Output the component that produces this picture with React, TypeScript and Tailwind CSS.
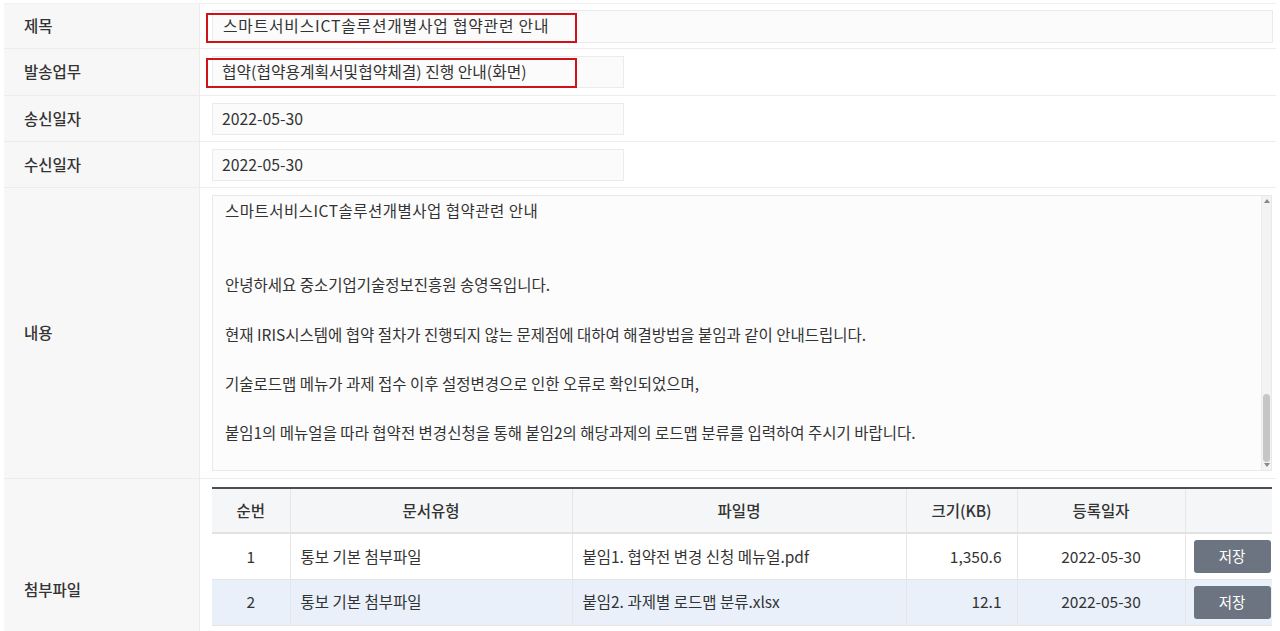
import React from 'react';

const font = "font-['Noto_Sans_CJK_KR','Noto_Sans',sans-serif]";

const Row = ({
  label,
  className,
  children,
}: {
  label: string;
  className: string;
  children: React.ReactNode;
}) => (
  <div className={`flex border-b border-[#ececec] ${className}`}>
    <div className="w-[196px] shrink-0 bg-[#f7f7f8] border-r border-[#ececec] pl-[20px] flex items-center text-[15.5px] font-medium text-[#333]">
      {label}
    </div>
    <div className="flex-1 relative pl-[12px] pr-[3px] flex items-center">{children}</div>
  </div>
);

const Input = ({ value }: { value: string }) => (
  <div className="h-[32px] w-[412px] bg-[#fbfbfb] border border-[#ebebeb] flex items-center pl-[9px] text-[15.8px] text-[#333]">
    {value}
  </div>
);

const RedBox = () => (
  <div className="absolute left-[6px] top-[9px] w-[371px] h-[30px] border-2 border-[#d0121b]" />
);

const files = [
  { no: 1, type: '통보 기본 첨부파일', name: '붙임1. 협약전 변경 신청 메뉴얼.pdf', size: '1,350.6', date: '2022-05-30' },
  { no: 2, type: '통보 기본 첨부파일', name: '붙임2. 과제별 로드맵 분류.xlsx', size: '12.1', date: '2022-05-30' },
];

export default function App() {
  return (
    <div className={`min-h-screen bg-white pt-[3px] pl-[4px] ${font} text-[#333]`}>
      <div className="w-[1272px] border-t border-[#f1f1f1]">
        <Row label="제목" className="h-[45px]">
          <div className="h-[33px] flex-1 bg-[#fbfbfb] border border-[#ebebeb] flex items-center pl-[10px] text-[15.8px] tracking-[0.8px]">
            스마트서비스ICT솔루션개별사업 협약관련 안내
          </div>
          <RedBox />
        </Row>
        <Row label="발송업무" className="h-[47px]">
          <Input value="협약(협약용계획서및협약체결) 진행 안내(화면)" />
          <RedBox />
        </Row>
        <Row label="송신일자" className="h-[46px]">
          <Input value="2022-05-30" />
        </Row>
        <Row label="수신일자" className="h-[46px]">
          <Input value="2022-05-30" />
        </Row>
        <Row label="내용" className="h-[291px]">
          <div className="flex-1 h-[276px] mr-[1px] bg-[#fcfcfc] border border-[#e9e9e9] flex overflow-hidden">
            <div className="flex-1 pl-[12px] pt-[2px] text-[15.5px] leading-[24.7px] text-[#333]">
              <p className="tracking-[0.5px]">스마트서비스ICT솔루션개별사업 협약관련 안내</p>
              <p>&nbsp;</p>
              <p>&nbsp;</p>
              <p>안녕하세요 중소기업기술정보진흥원 송영옥입니다.</p>
              <p>&nbsp;</p>
              <p>현재 IRIS시스템에 협약 절차가 진행되지 않는 문제점에 대하여 해결방법을 붙임과 같이 안내드립니다.</p>
              <p>&nbsp;</p>
              <p>기술로드맵 메뉴가 과제 접수 이후 설정변경으로 인한 오류로 확인되었으며,</p>
              <p>&nbsp;</p>
              <p>붙임1의 메뉴얼을 따라 협약전 변경신청을 통해 붙임2의 해당과제의 로드맵 분류를 입력하여 주시기 바랍니다.</p>
            </div>
            {/* scrollbar */}
            <div className="w-[10px] bg-[#f3f3f3] border-l border-[#eaeaea] flex flex-col items-center justify-between py-[3px]">
              <div className="w-0 h-0 border-l-[3px] border-r-[3px] border-b-[4px] border-l-transparent border-r-transparent border-b-[#888]" />
              <div className="flex-1 flex flex-col justify-end w-full items-center pb-[1px]">
                <div className="w-[7px] h-[68px] rounded-[4px] bg-[#c6c6c6]" />
              </div>
              <div className="w-0 h-0 border-l-[3px] border-r-[3px] border-t-[4px] border-l-transparent border-r-transparent border-t-[#888]" />
            </div>
          </div>
        </Row>
        <div className="flex h-[222px]">
          <div className="w-[196px] shrink-0 bg-[#f7f7f8] border-r border-[#ececec] pl-[20px] flex items-center text-[15.5px] font-medium">
            첨부파일
          </div>
          <div className="flex-1 pl-[12px] pr-[3px] pt-[8px]">
            <table className="w-[1060px] border-collapse table-fixed text-[15.5px] text-[#333]">
              <colgroup>
                <col className="w-[78px]" />
                <col className="w-[282px]" />
                <col className="w-[334px]" />
                <col className="w-[111px]" />
                <col className="w-[168px]" />
                <col className="w-[87px]" />
              </colgroup>
              <thead>
                <tr className="h-[45px] bg-[#f5f6f7] border-t-2 border-[#4a4f55] border-b-2 border-b-[#e2e2e2]">
                  <th className="font-medium border-r border-[#e6e6e6]">순번</th>
                  <th className="font-medium border-r border-[#e6e6e6]">문서유형</th>
                  <th className="font-medium border-r border-[#e6e6e6]">파일명</th>
                  <th className="font-medium border-r border-[#e6e6e6]">크기(KB)</th>
                  <th className="font-medium border-r border-[#e6e6e6]">등록일자</th>
                  <th className="font-medium"></th>
                </tr>
              </thead>
              <tbody>
                {files.map((f) => (
                  <tr
                    key={f.no}
                    className={`h-[46px] border-b border-[#e4e4e4] ${f.no === 2 ? 'bg-[#e9f0fa]' : 'bg-white'}`}
                  >
                    <td className="text-center border-r border-[#e6e6e6]">{f.no}</td>
                    <td className="pl-[10px] border-r border-[#e6e6e6]">{f.type}</td>
                    <td className="pl-[10px] border-r border-[#e6e6e6]">{f.name}</td>
                    <td className="text-right pr-[15px] border-r border-[#e6e6e6]">{f.size}</td>
                    <td className="text-center border-r border-[#e6e6e6]">{f.date}</td>
                    <td className="pl-[8px]">
                      <button className="w-[77px] h-[33px] rounded-[3px] bg-[#6b7480] text-white text-[14.5px]">
                        저장
                      </button>
                    </td>
                  </tr>
                ))}
              </tbody>
            </table>
          </div>
        </div>
      </div>
    </div>
  );
}
